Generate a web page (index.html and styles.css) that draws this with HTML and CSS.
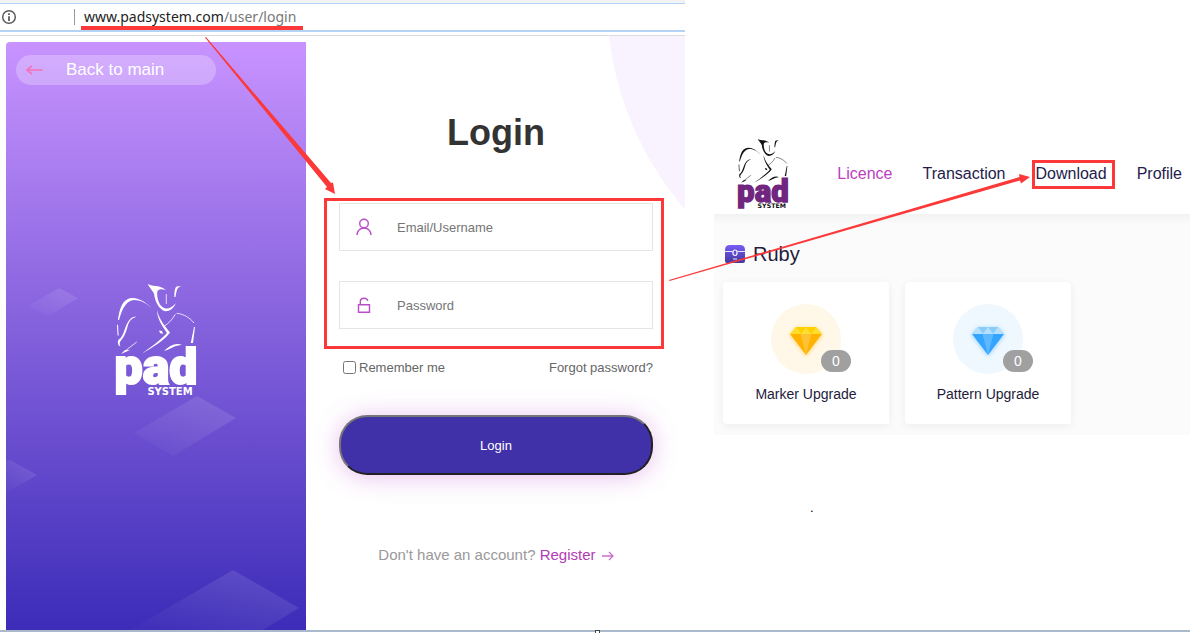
FILE: index.html
```html
<!DOCTYPE html>
<html lang="en">
<head>
<meta charset="UTF-8">
<meta name="viewport" content="width=device-width, initial-scale=1.0">
<title>PAD System - Login and Download</title>
<link rel="stylesheet" href="styles.css">
</head>
<body>

<svg width="0" height="0" class="defs" aria-hidden="true">
  <symbol id="figure" viewBox="0 0 80 112">
    <g fill="currentColor">
      <path d="M31.700 0 C35 2 39 1.500 43 2.500 C46 3.500 48 4.500 50 6 C46 5 43 5 41.500 7 C40.500 11 42 17 44 20.500 C47 25 53 27 59.700 19.300 C58 24 54 27.500 49 27.300 C43 25 39 18 38 9.500 C36 6 33 3 31.700 0Z"/>
      <path d="M65 2 L60.500 2.500 C58.500 4 58.500 9 58.300 13 L59.500 13 C60.500 8 60.500 5 62.500 3.500Z"/>
      <path d="M37 25.500 C31 20 26 16 18 16 C11 17 7 22 3 36 L2 36 C3 26 6 18 11 15.500 C19 11 29 17 37 25.500Z"/>
      <path d="M1 41 L2 40.500 L2.600 52 L1.500 51Z"/>
      <path d="M20.700 33 C16 33.500 13.500 37 12 41 C10.500 46 9.500 51 5 56.500 C3.500 58 3 60 4.500 62.500 C1.500 62 1 56 3.500 55 C8 52 8.500 42 13 36.500 C15 33.500 18 32 20.700 33Z"/>
      <path d="M41 26 C43 35 48 41 54 48.500 C49 56 37 63 25.700 70 C36 62 45 56 51 49 C46 42 41 34 41 26Z"/>
      <path d="M43 46.500 L46 47 L47 50 L44 49Z"/>
      <path d="M48 67 C53 62 60 58 66 61 C59 61 55 65 48 67Z"/>
      <path d="M79 43 L77 59 L74.800 59 L78 43Z"/>
      <path d="M9 66 L5 70 L14 66Z"/>
    </g>
    <g fill="none" stroke="currentColor" stroke-width=".8">
      <path d="M50.300 10 V20"/>
      <path d="M48.300 42 C53 39 56 36 59.300 30.300 M60.700 29.300 C68 30 74 34 78 39"/>
      <path d="M9 67 L20.700 58"/>
    </g>
  </symbol>
  <symbol id="gem" viewBox="0 0 32 28">
    <path class="gem-body" d="M0 7 H32 L16 28Z"/>
    <path class="gem-crown" d="M6 0 H26 L32 7 H0Z"/>
    <path class="gem-light" d="M6 0 L11 7 H0Z M16 0 L21 7 H11Z M26 0 L32 7 H21Z"/>
    <path class="gem-mid" d="M10.500 7 H21.500 L16 28Z"/>
  </symbol>
</svg>

<main class="page">

  <section class="browser">
    <div class="address-bar">
      <svg class="info" viewBox="0 0 16 16" width="16" height="16">
        <circle cx="8" cy="8" r="6.300" fill="none" stroke="#5a5a5a" stroke-width="1.500"/>
        <path d="M8 4.200 V6 M8 7.200 V12" stroke="#5a5a5a" stroke-width="1.800"/>
      </svg>
      <span class="url">www.padsystem.com<span class="path">/user/login</span></span>
    </div>

    <div class="login-view">
      <aside class="side">
        <svg class="shapes" viewBox="0 0 300 588" preserveAspectRatio="xMidYMax slice" aria-hidden="true">
          <defs>
            <linearGradient id="fade" x1="1" y1="0" x2="0" y2="1">
              <stop offset="0" stop-color="#fff" stop-opacity=".13"/>
              <stop offset="1" stop-color="#fff" stop-opacity=".01"/>
            </linearGradient>
          </defs>
          <g fill="url(#fade)">
            <path d="M53 246 L72 256 L42 274 L22 264Z"/>
            <path d="M191 354 L230 376 L167 414 L128 391Z"/>
            <path d="M4 418 L31 433 L0 451 V419Z"/>
            <path d="M227 528 L293 566 L257 588 H124Z"/>
          </g>
        </svg>
        <a class="back" href="#">
          <svg viewBox="0 0 17 10" width="17" height="10"><path d="M16.500 5 H1 M6 .8 L1 5 L6 9.200" fill="none" stroke="#f471b5" stroke-width="1.600"/></svg>
          Back to main
        </a>
        <svg class="logo" viewBox="0 0 80 112" width="80" height="112" role="img">
          <use href="#figure" width="80" height="112"/>
          <text class="logo-pad" x="40" y="100">pad</text>
          <text class="logo-system" x="54" y="111">SYSTEM</text>
        </svg>
      </aside>

      <div class="form-pane">
        <div class="bubble"></div>
        <form class="login-form">
          <h1>Login</h1>
          <label class="field">
            <svg viewBox="0 0 16 18" width="16" height="18"><g fill="none" stroke="#b84fc6" stroke-width="1.400"><circle cx="8" cy="5.500" r="4.300"/><path d="M1 17 C1 7.600 15 7.600 15 17"/></g></svg>
            <input type="text" placeholder="Email/Username" aria-label="Email/Username">
          </label>
          <label class="field">
            <svg viewBox="0 0 16 18" width="16" height="18"><g fill="none" stroke="#b84fc6" stroke-width="1.400"><path d="M2.500 8.700 H13.500 V16.300 H2.500Z M4.300 8.500 V5.500 C4.300 1.200 11.700 1.200 11.700 5"/></g></svg>
            <input type="password" placeholder="Password" aria-label="Password">
          </label>
          <div class="form-row">
            <label class="remember"><input type="checkbox">Remember me</label>
            <a href="#">Forgot password?</a>
          </div>
          <button type="submit">Login</button>
          <p class="register">Don't have an account?
            <a href="#">Register <svg viewBox="0 0 12 10" width="12" height="10"><path d="M0 5 H11 M7 1 L11 5 L7 9" fill="none" stroke="#c970cf" stroke-width="1.300"/></svg></a>
          </p>
        </form>
      </div>
    </div>
  </section>

  <section class="account">
    <header class="account-header">
      <svg class="logo small" viewBox="0 0 80 112" width="50" height="70" role="img">
        <use href="#figure" width="80" height="112"/>
        <text class="logo-pad" x="40" y="100">pad</text>
        <text class="logo-system" x="54" y="111">SYSTEM</text>
      </svg>
      <nav>
        <a class="active" href="#">Licence</a>
        <a href="#">Transaction</a>
        <a href="#">Download</a>
        <a href="#">Profile</a>
      </nav>
    </header>
    <div class="licences">
      <h2>
        <svg viewBox="0 0 20 18" width="20" height="18">
          <defs><linearGradient id="chest" x1="0" y1="0" x2="0" y2="1"><stop offset="0" stop-color="#7a5cf5"/><stop offset="1" stop-color="#42389f"/></linearGradient></defs>
          <path d="M5 0 H15 Q20 0 20 5 V16 Q20 18 18 18 H2 Q0 18 0 16 V5 Q0 0 5 0Z" fill="url(#chest)"/>
          <path d="M0 6.500 H7.500 M12.500 6.500 H20 M8 14 H12" stroke="#e8e5ff"/>
          <rect x="8" y="5" width="4" height="5.500" rx="2" fill="#5e4bd0" stroke="#fff" stroke-width="1.200"/>
        </svg>
        Ruby
      </h2>
      <div class="cards">
        <article class="card marker">
          <div class="gem"><svg viewBox="0 0 32 28" width="32" height="28"><use href="#gem"/></svg><span class="count">0</span></div>
          <h3>Marker Upgrade</h3>
        </article>
        <article class="card pattern">
          <div class="gem"><svg viewBox="0 0 32 28" width="32" height="28"><use href="#gem"/></svg><span class="count">0</span></div>
          <h3>Pattern Upgrade</h3>
        </article>
      </div>
    </div>
    <p class="note">.</p>
  </section>

</main>

<footer class="bottom-edge"></footer>

<!-- step markers drawn over both views -->
<svg class="marks" width="1196" height="633" viewBox="0 0 1196 633" aria-hidden="true">
  <g fill="#fc3838">
    <rect x="81" y="26" width="222" height="4"/>
    <path d="M205 37.500 L206 37 L331 183 L333 182.500 L335 194 L325 189 L327 187Z"/>
    <path d="M669 280 L1019.500 177 L1019 174 L1030 177 L1021 183.500 L1020 180.500 L669.500 281Z"/>
  </g>
  <g fill="none" stroke="#fc3838" stroke-width="3">
    <rect x="325.500" y="199.500" width="337" height="148"/>
    <rect x="1033.500" y="161.500" width="80" height="26"/>
  </g>
  <rect x="595.500" y="630.500" width="4" height="4" fill="#fff" stroke="#444"/>
</svg>

</body>
</html>
```
FILE: styles.css
```css
* {
  box-sizing: border-box;
}

body {
  margin: 0;
  min-height: 100vh;
  display: flex;
  flex-direction: column;
  position: relative;
  overflow-x: hidden;
  background: #fff;
  color: #333;
  font-family: "Liberation Sans", Arial, sans-serif;
  font-size: 13px;
}

a {
  color: inherit;
  text-decoration: none;
}

h1, h2, h3, p {
  margin: 0;
}

.defs {
  position: absolute;
}

.page {
  flex: 1;
  display: grid;
  grid-template-columns: minmax(0, 1fr) 476px;
  gap: 29px;
  padding-right: 6px;
}

.browser {
  display: flex;
  flex-direction: column;
}

/* address bar */
.address-bar {
  display: flex;
  align-items: center;
  height: 32px;
  border-top: 3px solid #f2f2f2;
  border-bottom: 2px solid #b5d4f5;
  box-shadow: inset 0 1px #b5d4f5;
}

.info {
  margin-left: 1px;
}

.url {
  margin-left: 57px;
  padding-left: 9px;
  border-left: 1px solid #999;
  font-family: "Noto Sans", "Open Sans", sans-serif;
  font-size: 14px;
  line-height: 16px;
  color: #222;
}

.path {
  color: #777;
}

.login-view {
  flex: 1;
  display: flex;
  margin-top: 3px;
  padding-left: 6px;
  border-top: 1px solid #dcdcdc;
}

/* left panel */
.side {
  position: relative;
  display: flex;
  flex-direction: column;
  width: 300px;
  margin-top: 6px;
  padding: 13px 10px;
  border-top-left-radius: 4px;
  background: linear-gradient(#c893ff, #3c2cb8);
  color: #fff;
}

.shapes {
  position: absolute;
  inset: 0;
  width: 100%;
  height: 100%;
}

.back {
  position: relative;
  display: flex;
  align-items: center;
  gap: 23px;
  width: 200px;
  height: 30px;
  padding-left: 10px;
  border-radius: 15px;
  background: rgba(255, 255, 255, 0.25);
  font-size: 17px;
}

.side .logo {
  position: relative;
  align-self: center;
  margin-top: 199px;
}

.logo {
  overflow: visible;
}

.logo-pad {
  font-family: "Liberation Sans Narrow", Roboto, sans-serif;
  font-weight: 900;
  font-size: 50px;
  text-anchor: middle;
  fill: currentColor;
  stroke: currentColor;
  stroke-width: 2px;
}

.logo-system {
  font-family: "DejaVu Sans", sans-serif;
  font-weight: 700;
  font-size: 10px;
  text-anchor: middle;
  fill: currentColor;
}

.small {
  color: #111;
}

.small .logo-pad {
  fill: #70257f;
  stroke: #70257f;
}

/* login form */
.form-pane {
  position: relative;
  flex: 1;
  overflow: hidden;
  padding: 76px 32px 0 33px;
}

.bubble {
  position: absolute;
  top: -356px;
  right: -562px;
  width: 640px;
  height: 640px;
  border-radius: 50%;
  background: #f8f3fe;
}

.login-form {
  position: relative;
  display: flex;
  flex-direction: column;
}

h1 {
  margin-bottom: 49px;
  font-size: 36px;
  line-height: 42px;
  text-align: center;
}

.field {
  display: flex;
  align-items: center;
  gap: 25px;
  height: 48px;
  padding: 0 16px;
  border: 1px solid #e5e5e5;
  background: #fff;
}

.field + .field {
  margin-top: 30px;
}

.field input {
  flex: 1;
  min-width: 0;
  padding: 0;
  border: 0;
  outline: 0;
  background: none;
  font: inherit;
}

.field input::placeholder {
  color: #757575;
}

.form-row {
  display: flex;
  justify-content: space-between;
  align-items: center;
  height: 20px;
  margin-top: 28px;
  color: #666;
}

.remember {
  display: flex;
  align-items: center;
}

button {
  height: 60px;
  margin-top: 38px;
  border: 2px solid;
  border-color: #767676 #212121 #212121 #767676;
  border-radius: 28px;
  background: #4131a9;
  box-shadow: 0 2px 24px rgba(190, 70, 210, 0.35);
  color: #fff;
  font: inherit;
  cursor: pointer;
}

.register {
  margin-top: 70px;
  font-size: 15px;
  line-height: 20px;
  text-align: center;
  color: #999;
}

.register a {
  color: #b23cb5;
}

.register svg {
  margin-left: 2px;
  vertical-align: -1px;
}

/* account area */
.account {
  padding-top: 134px;
}

.account-header {
  position: relative;
  display: flex;
  align-items: center;
  justify-content: space-between;
  height: 80px;
  padding: 0 8px 0 24px;
}

nav {
  display: flex;
  gap: 30px;
  font-size: 16px;
  color: #241c4a;
}

.active {
  color: #bb3fc0;
}

.licences {
  padding: 26px 9px 11px;
  background: linear-gradient(#f2f2f2, #fbfbfb 10px);
  color: #241c3d;
}

h2 {
  display: flex;
  align-items: center;
  gap: 8px;
  margin-bottom: 14px;
  padding-left: 2px;
  font-size: 20px;
  font-weight: 400;
  line-height: 28px;
}

.cards {
  display: flex;
  gap: 16px;
}

.card {
  display: flex;
  flex-direction: column;
  align-items: center;
  width: 166px;
  padding: 22px 0 20px;
  border-radius: 4px 4px 0 4px;
  background: #fff;
  box-shadow: 0 2px 8px rgba(0, 0, 0, 0.06);
}

.gem {
  position: relative;
  display: flex;
  align-items: center;
  justify-content: center;
  width: 70px;
  height: 70px;
  padding-top: 4px;
  border-radius: 50%;
}

.count {
  position: absolute;
  right: -10px;
  bottom: 2px;
  width: 30px;
  border-radius: 11px;
  background: #a0a0a0;
  color: #fff;
  font-size: 14px;
  line-height: 22px;
  text-align: center;
}

h3 {
  margin-top: 10px;
  font-size: 14px;
  font-weight: 400;
  line-height: 20px;
}

.marker .gem {
  background: #fff8e8;
}

.marker svg {
  fill: #ffb300;
  filter: drop-shadow(0 1px 2px rgba(255, 179, 0, 0.5));
  --crown: #ffd000;
  --light: #ffdc30;
  --mid: #ffc233;
}

.pattern .gem {
  background: #eff8ff;
}

.pattern svg {
  fill: #33a5ff;
  filter: drop-shadow(0 1px 2px rgba(51, 165, 255, 0.5));
  --crown: #8accfa;
  --light: #b8e0fd;
  --mid: #5cb8ff;
}

.gem-crown {
  fill: var(--crown);
}

.gem-light {
  fill: var(--light);
}

.gem-mid {
  fill: var(--mid);
}

.note {
  margin-top: 65px;
  padding-left: 96px;
  line-height: 16px;
  color: #000;
}

.bottom-edge {
  height: 2px;
  margin: 0 6px 1px 0;
  background: #abb9cc;
}

.marks {
  position: absolute;
  top: 0;
  left: 0;
  pointer-events: none;
}
```
